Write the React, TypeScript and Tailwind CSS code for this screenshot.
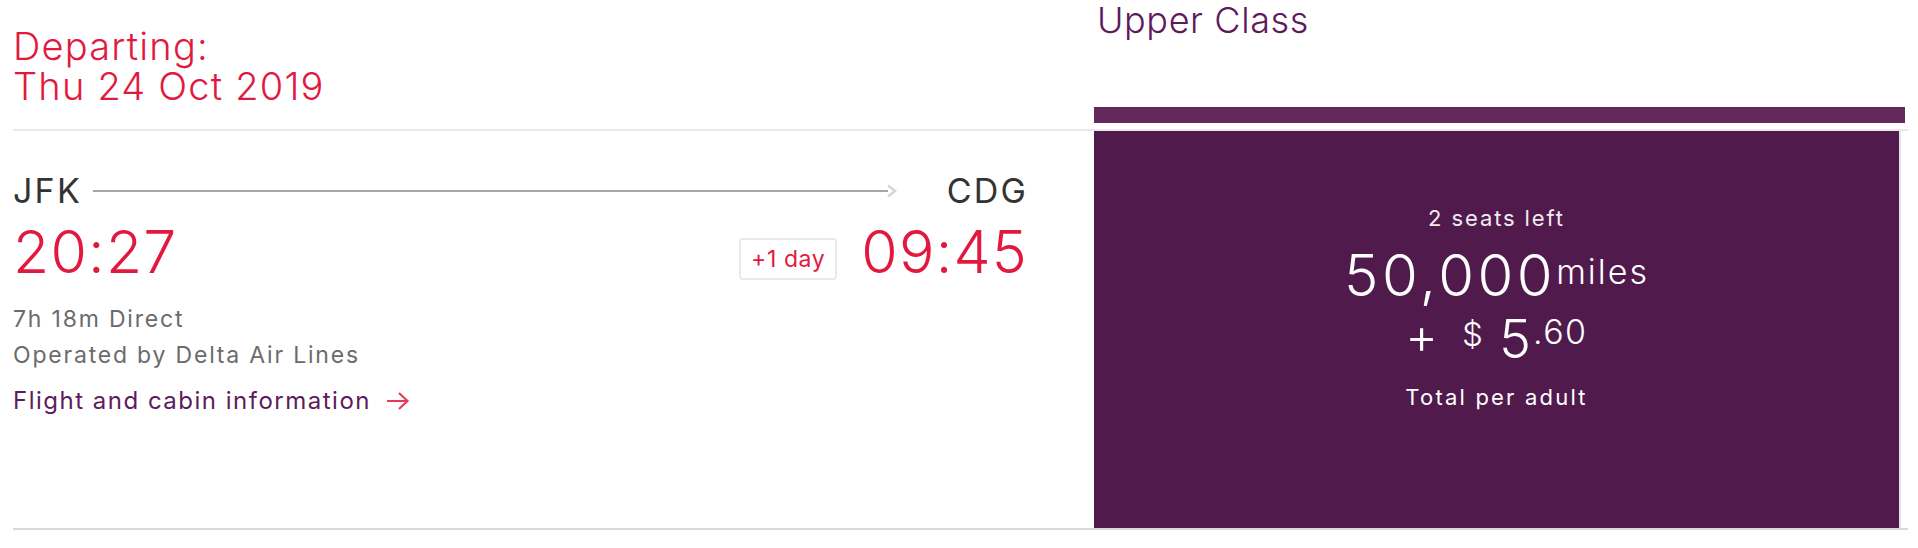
const font = { fontFamily: "Inter, 'Noto Sans', sans-serif" };

function RouteLine() {
  return (
    <div className="ml-[11px] mr-[50px] flex flex-1 items-center">
      <div className="h-[2px] flex-1 bg-[#a6a6a6]" />
      <svg width="11" height="14" viewBox="0 0 11 14" className="-ml-[2px] shrink-0">
        <path d="M2 1.5 L9 7 L2 12.5" fill="none" stroke="#d4d4d4" strokeWidth="2.4" />
      </svg>
    </div>
  );
}

function LinkArrow() {
  return (
    <svg width="24" height="20" viewBox="0 0 24 20" className="ml-[15px] shrink-0">
      <path d="M1 10 H21.5 M13 2 L21.5 10 L13 18" fill="none" stroke="#e8395a" strokeWidth="2.2" />
    </svg>
  );
}

function FlightInfo() {
  return (
    <div className="flex-1 pr-[66px] pt-[40px]">
      <div className="flex h-[40px] items-center text-[34px] leading-[40px] tracking-[2.2px] text-[#333]">
        <span>JFK</span>
        <RouteLine />
        <span>CDG</span>
      </div>
      <div className="mt-[11px] flex h-[60px] items-center text-[59px] font-light leading-[60px] tracking-[1.2px] text-[#e2193f]">
        <span className="flex-1">20:27</span>
        <span className="mr-[24px] mt-[14px] flex h-[42px] items-center rounded-[4px] border-2 border-[#e9e9e9] px-[10px] text-[23px] font-normal leading-none tracking-[0.6px]">
          +1 day
        </span>
        <span>09:45</span>
      </div>
      <div className="mt-[19px] text-[23px] leading-[36px] tracking-[1.8px] text-[#6b6b6b]">
        <p>7h 18m Direct</p>
        <p>Operated by Delta Air Lines</p>
      </div>
      <a className="mt-[10px] flex items-center text-[24px] leading-[36px] tracking-[1.5px] text-[#5e1b5c]">
        <span>Flight and cabin information</span>
        <LinkArrow />
      </a>
    </div>
  );
}

function FareBox() {
  return (
    <div className="mr-[7px] flex-1 border-r-2 border-[#e4e4e4] bg-[#501b4c] pt-[73px] text-center text-white">
      <p className="text-[22px] leading-[28px] tracking-[1.9px] text-[#f1eaf0]">2 seats left</p>
      <p className="mt-[13px] text-[58px] font-light leading-[60px] tracking-[3.5px]">
        50,000
        <span className="align-[12px] text-[34px] leading-none tracking-[2px]">miles</span>
      </p>
      <p className="mt-[6px] text-[54px] font-light leading-[50px]">
        <span className="mr-[24px] align-[4px] text-[50px] leading-none">+</span>
        <span className="mr-[16px] align-[12px] text-[33px] leading-none">$</span>
        <span className="mr-[2px]">5</span>
        <span className="align-[14px] text-[34px] leading-none tracking-[1.5px]">.60</span>
      </p>
      <p className="mt-[19px] text-[22px] leading-[28px] tracking-[2.2px]">Total per adult</p>
    </div>
  );
}

export default function App() {
  return (
    <div className="bg-white pl-[13px] pr-[10px]" style={font}>
      <div className="flex h-[129px]">
        <div className="flex-1 pt-[26px] text-[38px] font-light leading-[40px] tracking-[1.2px] text-[#e2193f]">
          <p>Departing:</p>
          <p>Thu 24 Oct 2019</p>
        </div>
        <div className="flex w-[814px] flex-col justify-between pb-[6px]">
          <h2 className="pl-[3px] text-[36px] font-light leading-[40px] tracking-[0.6px] text-[#5f1a5d]">
            Upper Class
          </h2>
          <div className="mr-[3px] h-[16px] bg-[#63295d]" />
        </div>
      </div>
      <div className="h-[2px] bg-[#e8e8e8]" />
      <div className="flex h-[397px]">
        <FlightInfo />
        <div className="flex w-[814px]">
          <FareBox />
        </div>
      </div>
      <div className="h-[2px] bg-[#d9d9d9]" />
    </div>
  );
}
